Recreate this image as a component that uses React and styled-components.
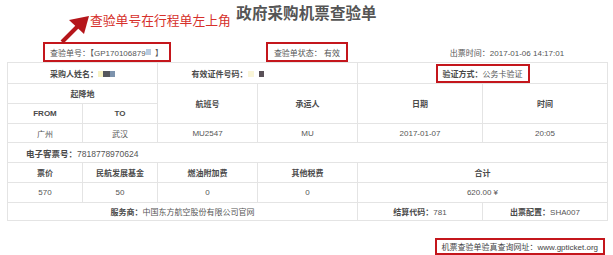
import React from 'react';
import styled, { createGlobalStyle } from 'styled-components';

const GlobalStyle = createGlobalStyle`
  html, body {
    margin: 0;
    padding: 0;
    background: #fff;
  }
  body {
    font-family: "Liberation Sans", "Noto Sans CJK SC", sans-serif;
    color: #555;
  }
`;

const Page = styled.div`
  width: 613px;
  height: 255px;
  position: relative;
  overflow: hidden;
`;

const Header = styled.div`
  height: 42px;
  display: flex;
  justify-content: center;
  align-items: flex-start;
`;

const Title = styled.h1`
  margin: 3px 0 0 0;
  font-size: 15.5px;
  line-height: 22px;
  font-weight: bold;
  color: #555;
  letter-spacing: 0.1px;
`;

const Note = styled.div`
  position: absolute;
  left: 90px;
  top: 10px;
  font-size: 12.8px;
  line-height: 20px;
  color: #d6302b;
  font-family: "Noto Sans CJK SC", sans-serif;
`;

const Arrow = styled.svg`
  position: absolute;
  left: 55px;
  top: 10px;
`;

const InfoRow = styled.div`
  margin: 0 6px 0 7px;
  height: 20px;
  display: grid;
  grid-template-columns: repeat(3, 1fr);
  align-items: center;
  font-size: 8px;
  color: #555;
  white-space: nowrap;
`;

const InfoItem = styled.div`
  display: flex;
  justify-content: center;
`;

const Boxed = styled.span`
  display: inline-flex;
  align-items: center;
  box-sizing: border-box;
  white-space: nowrap;
  height: ${(p) => p.$h || 20}px;
  padding: 0 ${(p) => p.$px || 6}px;
  border: 2px solid #c4161c;
  ${(p) => (p.$w ? `width: ${p.$w}px;` : '')}
`;

const Blur = styled.span`
  display: inline-block;
  flex: none;
  width: ${(p) => p.$w}px;
  height: 6px;
  background: ${(p) => p.$c};
  vertical-align: middle;
`;

const Gap = styled.span`
  display: inline-block;
  width: ${(p) => p.$w}px;
`;

const CloseBracket = styled.span`
  margin-left: auto;
  margin-right: 1px;
`;

const Table = styled.table`
  margin: 0 6px 0 7px;
  border-collapse: collapse;
  table-layout: fixed;
  width: 600px;
  font-size: 8px;
  color: #555;
`;

const Cell = styled.td`
  border: 1px solid #e4e4e4;
  height: ${(p) => p.$h || 19}px;
  padding: 0;
  text-align: ${(p) => (p.$left ? 'left' : 'center')};
  padding-left: ${(p) => (p.$left ? 18 : 0)}px;
  font-weight: ${(p) => (p.$bold ? 'bold' : 'normal')};
  color: ${(p) => (p.$bold ? '#4a4a4a' : '#555')};
  font-size: ${(p) => p.$fs || 8}px;
  white-space: nowrap;
`;

const Label = styled.b`
  color: #4a4a4a;
`;

const Footer = styled.div`
  display: flex;
  justify-content: flex-end;
  margin: 17px 8px 0 0;
  font-size: 8px;
  color: #444;
`;

export default function App() {
  return (
    <Page>
      <GlobalStyle />
      <Header>
        <Title>政府采购机票查验单</Title>
      </Header>
      <Note>查验单号在行程单左上角</Note>
      <Arrow width="40" height="36" viewBox="0 0 40 36">
        <line x1="7" y1="32" x2="24" y2="15" stroke="#b5161b" strokeWidth="4" />
        <polygon points="34,6 14,10 29,24" fill="#b5161b" />
      </Arrow>

      <InfoRow>
        <InfoItem>
          <Boxed $w={128} $px={5}>
            查验单号：【GP170106879
            <Blur $w={5} $c="#b9cbe0" />
            <CloseBracket>】</CloseBracket>
          </Boxed>
        </InfoItem>
        <InfoItem>
          <Boxed $px={6}>查验单状态： 有效</Boxed>
        </InfoItem>
        <InfoItem>出票时间：2017-01-06 14:17:01</InfoItem>
      </InfoRow>

      <Table>
        <colgroup>
          <col style={{ width: 75 }} />
          <col style={{ width: 75 }} />
          <col style={{ width: 100 }} />
          <col style={{ width: 100 }} />
          <col style={{ width: 125 }} />
          <col style={{ width: 125 }} />
        </colgroup>
        <tbody>
          <tr>
            <Cell colSpan={2} $h={20}>
              <Label>采购人姓名：</Label>
              <Blur $w={5} $c="#f7f2c4" />
              <Blur $w={7} $c="#55565c" />
              <Blur $w={5} $c="#7d93ad" />
            </Cell>
            <Cell colSpan={2} $h={20}>
              <Label>有效证件号码：</Label>
              <Blur $w={6} $c="#f9f5d8" />
              <Gap $w={5} />
              <Blur $w={5} $c="#5a5158" />
              <Gap $w={60} />
            </Cell>
            <Cell colSpan={2} $h={20}>
              <Boxed $h={19} $px={5}>
                <Label>验证方式：</Label>公务卡验证
              </Boxed>
            </Cell>
          </tr>
          <tr>
            <Cell colSpan={2} $bold>起降地</Cell>
            <Cell rowSpan={2} $bold>航班号</Cell>
            <Cell rowSpan={2} $bold>承运人</Cell>
            <Cell rowSpan={2} $bold>日期</Cell>
            <Cell rowSpan={2} $bold>时间</Cell>
          </tr>
          <tr>
            <Cell $bold>FROM</Cell>
            <Cell $bold>TO</Cell>
          </tr>
          <tr>
            <Cell $h={18}>广州</Cell>
            <Cell $h={18}>武汉</Cell>
            <Cell $h={18}>MU2547</Cell>
            <Cell $h={18}>MU</Cell>
            <Cell $h={18}>2017-01-07</Cell>
            <Cell $h={18}>20:05</Cell>
          </tr>
          <tr>
            <Cell colSpan={6} $left $fs={8.5}>
              <Label>电子客票号：</Label>7818778970624
            </Cell>
          </tr>
          <tr>
            <Cell $bold>票价</Cell>
            <Cell $bold>民航发展基金</Cell>
            <Cell $bold>燃油附加费</Cell>
            <Cell $bold>其他税费</Cell>
            <Cell colSpan={2} $bold>合计</Cell>
          </tr>
          <tr>
            <Cell>570</Cell>
            <Cell>50</Cell>
            <Cell>0</Cell>
            <Cell>0</Cell>
            <Cell colSpan={2}>620.00 ¥</Cell>
          </tr>
          <tr>
            <Cell colSpan={4} $h={17}>
              <Label>服务商：</Label>中国东方航空股份有限公司官网
            </Cell>
            <Cell $h={17}>
              <Label>结算代码：</Label>781
            </Cell>
            <Cell $h={17}>
              <Label>出票配置：</Label>SHA007
            </Cell>
          </tr>
        </tbody>
      </Table>

      <Footer>
        <Boxed $h={17} $px={5}>
          机票查验单验真查询网址：www.gpticket.org
        </Boxed>
      </Footer>
    </Page>
  );
}
